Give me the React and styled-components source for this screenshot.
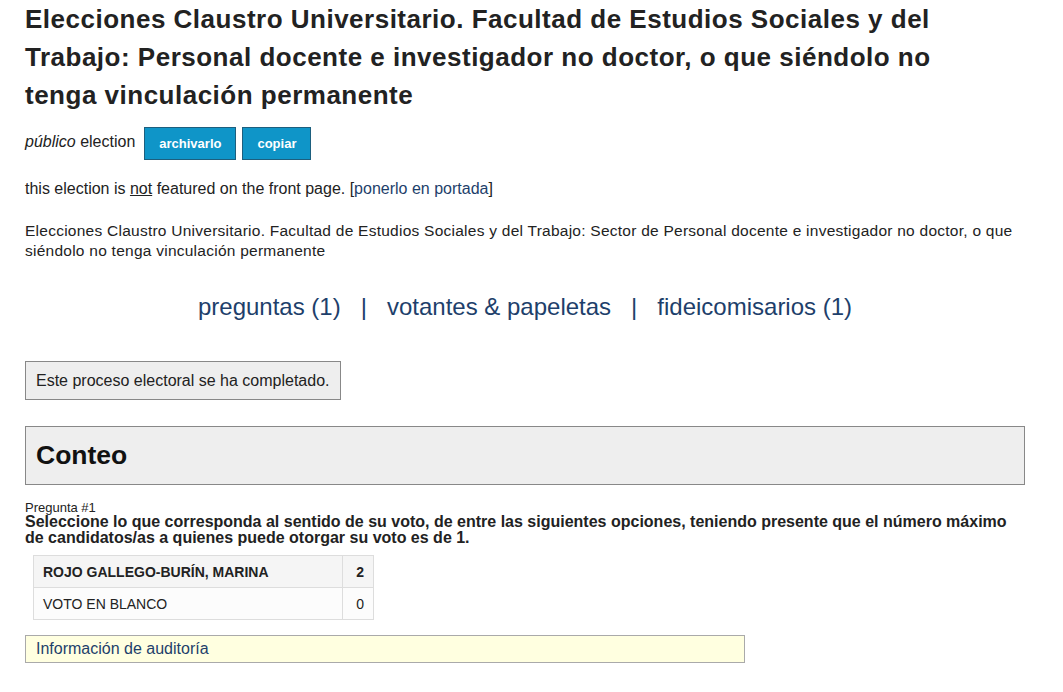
import React from "react";
import styled, { createGlobalStyle } from "styled-components";

const Global = createGlobalStyle`
  html, body { margin: 0; padding: 0; background: #fff; }
  body { font-family: "Liberation Sans", Arial, sans-serif; color: #222; }
`;

const Page = styled.div`
  width: 1000px;
  padding: 0 0 20px 25px;
`;

const Title = styled.h1`
  margin: 0;
  max-width: 960px;
  font-size: 26px;
  letter-spacing: 0.5px;
  line-height: 38px;
  font-weight: bold;
  color: #222;
`;

const MetaRow = styled.div`
  display: flex;
  align-items: center;
  gap: 6px;
  margin-top: 13px;
  font-size: 16px;
`;

const MetaText = styled.span`
  margin-right: 3px;
  padding-bottom: 4px;
`;

const Button = styled.button`
  font-family: "Liberation Sans", Arial, sans-serif;
  font-weight: bold;
  font-size: 13px;
  color: #fff;
  background: #0f95c8;
  border: 1px solid #1d5f7e;
  height: 33px;
  padding: 0 14px;
  cursor: pointer;
`;

const Featured = styled.p`
  margin: 20px 0 0;
  font-size: 16px;
  color: #222;
`;

const Link = styled.a`
  color: #1e3f6b;
  text-decoration: none;
`;

const U = styled.u``;

const Description = styled.p`
  margin: 23px 0 0;
  font-size: 15.5px;
  letter-spacing: 0.25px;
  line-height: 20px;
  color: #222;
`;

const Nav = styled.nav`
  display: flex;
  justify-content: center;
  align-items: center;
  gap: 20px;
  margin-top: 32px;
  font-size: 24px;
  color: #1e3f6b;
`;

const NavLink = styled.a`
  color: #1e3f6b;
  text-decoration: none;
`;

const Status = styled.div`
  display: inline-block;
  margin-top: 40px;
  padding: 10px 10px 9px;
  background: #eee;
  border: 1px solid #888;
  font-size: 16px;
  color: #222;
`;

const Block = styled.div``;

const CountHeader = styled.div`
  margin-top: 26px;
  background: #eee;
  border: 1px solid #888;
  padding: 0 10px;
  height: 57px;
  display: flex;
  align-items: center;
`;

const H2 = styled.h2`
  margin: 0;
  font-size: 26.5px;
  font-weight: bold;
  color: #111;
`;

const QLabel = styled.div`
  margin-top: 16px;
  font-size: 13px;
  line-height: 13px;
  color: #222;
`;

const QText = styled.div`
  font-size: 16px;
  font-weight: bold;
  line-height: 16px;
  color: #222;
`;

const Table = styled.table`
  margin: 9px 0 0 8px;
  border-collapse: collapse;
  font-size: 14px;
`;

const Td = styled.td`
  border: 1px solid #ddd;
  height: 31px;
  padding: 0 9px;
  background: ${(p) => (p.$lead ? "#f5f5f5" : "#fcfcfc")};
  font-weight: ${(p) => (p.$lead ? "bold" : "normal")};
  text-align: ${(p) => (p.$num ? "right" : "left")};
  width: ${(p) => (p.$num ? "12px" : "290px")};
  color: #222;
`;

const Audit = styled.div`
  margin-top: 15px;
  width: 698px;
  height: 26px;
  display: flex;
  align-items: center;
  padding: 0 10px;
  background: #ffffe0;
  border: 1px solid #aaa;
  font-size: 16px;
`;

export default function App() {
  const rows = [
    { name: "ROJO GALLEGO-BURÍN, MARINA", n: 2, lead: true },
    { name: "VOTO EN BLANCO", n: 0, lead: false },
  ];
  return (
    <>
      <Global />
      <Page>
        <Title>
          Elecciones Claustro Universitario. Facultad de Estudios Sociales y del
          Trabajo: Personal docente e investigador no doctor, o que siéndolo no
          tenga vinculación permanente
        </Title>
        <MetaRow>
          <MetaText>
            <em>público</em> election
          </MetaText>
          <Button>archivarlo</Button>
          <Button>copiar</Button>
        </MetaRow>
        <Featured>
          this election is <U>not</U> featured on the front page. [
          <Link href="#">ponerlo en portada</Link>]
        </Featured>
        <Description>
          Elecciones Claustro Universitario. Facultad de Estudios Sociales y del
          Trabajo: Sector de Personal docente e investigador no doctor, o que
          siéndolo no tenga vinculación permanente
        </Description>
        <Nav>
          <NavLink href="#">preguntas (1)</NavLink>
          <span>|</span>
          <NavLink href="#">votantes &amp; papeletas</NavLink>
          <span>|</span>
          <NavLink href="#">fideicomisarios (1)</NavLink>
        </Nav>
        <Status>Este proceso electoral se ha completado.</Status>
        <Block>
          <CountHeader>
            <H2>Conteo</H2>
          </CountHeader>
          <QLabel>Pregunta #1</QLabel>
          <QText>
            Seleccione lo que corresponda al sentido de su voto, de entre las
            siguientes opciones, teniendo presente que el número máximo de
            candidatos/as a quienes puede otorgar su voto es de 1.
          </QText>
          <Table>
            <tbody>
              {rows.map((r) => (
                <tr key={r.name}>
                  <Td $lead={r.lead}>{r.name}</Td>
                  <Td $lead={r.lead} $num>
                    {r.n}
                  </Td>
                </tr>
              ))}
            </tbody>
          </Table>
          <Audit>
            <Link href="#">Información de auditoría</Link>
          </Audit>
        </Block>
      </Page>
    </>
  );
}
